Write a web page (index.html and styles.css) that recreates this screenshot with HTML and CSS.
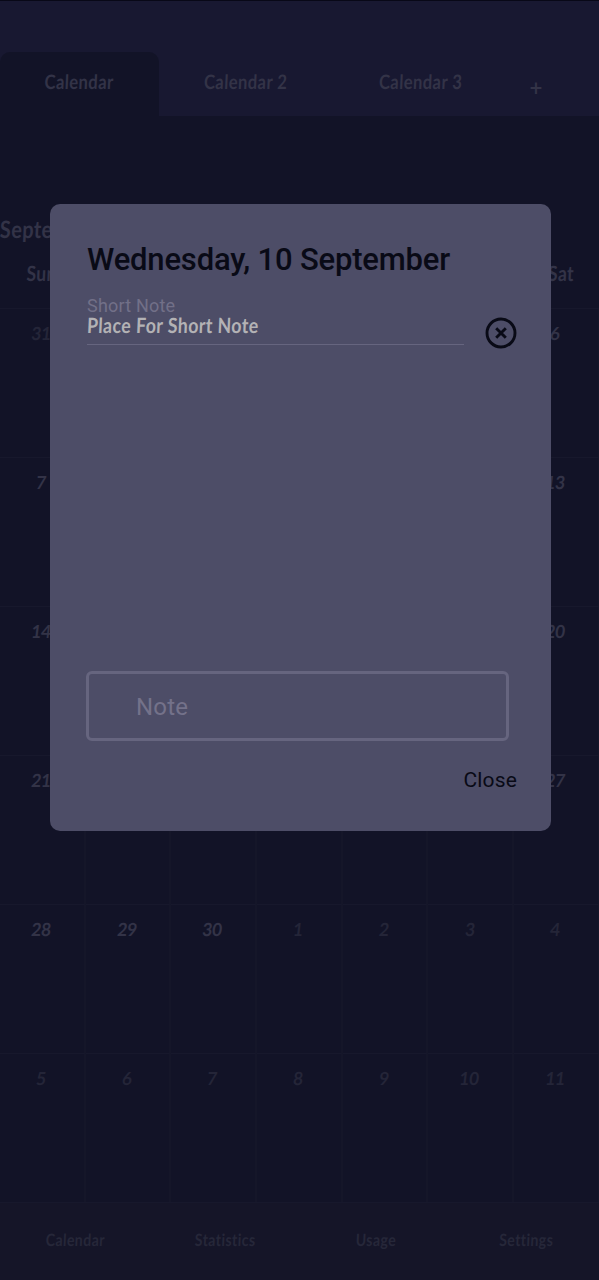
FILE: index.html
```html
<!DOCTYPE html>
<html lang="en">
<head>
<meta charset="utf-8">
<title>Calendar</title>
<link rel="stylesheet" href="styles.css">
</head>
<body>
<div class="app">
  <header class="tabs">
    <div class="tab active"><span class="hand">Calendar</span></div>
    <div class="tab"><span class="hand">Calendar 2</span></div>
    <div class="tab"><span class="hand">Calendar 3</span></div>
    <div class="add">+</div>
  </header>
  <div class="month"><span class="hand">Septe</span></div>
  <div class="weekdays"><span class="hand">Sun</span><span class="hand">Sat</span></div>
  <main class="grid" id="grid"></main>
  <footer class="nav">
    <span class="hand">Calendar</span><span class="hand">Statistics</span><span class="hand">Usage</span><span class="hand">Settings</span>
  </footer>
</div>
<section class="dialog">
  <h1 class="title">Wednesday, 10 September</h1>
  <div class="short">
    <div class="field">
      <div class="label">Short Note</div>
      <div class="value"><span class="hand">Place For Short Note</span></div>
    </div>
    <svg class="clear" viewBox="0 0 32 32" width="32" height="32">
      <circle cx="16" cy="16" r="14" fill="none" stroke="#090a16" stroke-width="2.9"/>
      <path d="M11.2 11.2 20.8 20.8M20.8 11.2 11.2 20.8" stroke="#090a16" stroke-width="2.9"/>
    </svg>
  </div>
  <div class="note">Note</div>
  <div class="close">Close</div>
</section>
<script src="script.js"></script>
</body>
</html>
```
FILE: styles.css
```css
* { box-sizing: border-box; }
body { margin: 0; background: #121327; font-family: Roboto, sans-serif; }
.hand { display: inline-block; font-family: Lato, sans-serif; font-weight: 700; white-space: nowrap; letter-spacing: .5px; transform: scaleX(.83) skewX(-3deg); }
.app { width: 599px; height: 1280px; display: flex; flex-direction: column; overflow: hidden; color: #333347; }
.tabs { height: 116px; padding-top: 51px; display: flex; background: #181831; border-top: 1px solid #080817; flex: none; }
.tab { width: 175px; display: flex; justify-content: center; padding: 17px 2px 0 0; font-size: 20px; line-height: 24px; }
.tab.active { width: 159px; background: #121327; border-radius: 10px 10px 0 0; }
.add { width: 54px; text-align: center; font-size: 22px; line-height: 26px; padding-top: 24px; }
.month { height: 134px; padding-top: 98px; font-size: 24px; line-height: 30px; flex: none; }
.month .hand { transform-origin: left; }
.weekdays { height: 58px; display: flex; justify-content: space-between; padding: 10px 23px 0; font-size: 21px; line-height: 26px; flex: none; }
.grid { display: grid; grid-template-columns: repeat(7, 85.7px); grid-template-rows: repeat(6, 149px); flex: none; }
.cell { border-top: 1px solid #17182c; border-right: 2px solid #151629; text-align: center; font-size: 18px; line-height: 24px; padding: 12px 1px 0 0; }
.cell .hand { letter-spacing: 0; transform: scaleX(.95) skewX(-7deg); }
.cell.dim { color: #242538; }
.nav { flex: 1; background: #151528; border-top: 1px solid #17182c; display: grid; grid-template-columns: repeat(4, 150.5px); justify-items: center; padding-top: 25px; margin-left: -1px; font-size: 17px; line-height: 24px; color: #262739; }
.dialog { position: absolute; left: 50px; top: 204px; width: 501px; height: 627px; background: #4d4d67; border-radius: 10px; display: flex; flex-direction: column; padding: 0 34px 0 36px; }
.title { margin: 37px 0 0 1px; font-size: 31px; line-height: 38px; font-weight: 500; letter-spacing: -.18px; color: #090a16; white-space: nowrap; }
.short { display: flex; margin: 16px 0 0 1px; justify-content: space-between; height: 50px; }
.field { width: 377px; border-bottom: 1px solid #66657f; }
.label { font-size: 18px; line-height: 22px; color: #727088; letter-spacing: .2px; }
.value { font-size: 21px; line-height: 24px; color: #b3b2b5; margin-top: -4px; }
.value .hand { transform-origin: left; transform: scaleX(.845) skewX(-3deg); }
.clear { margin-top: 22px; }
.note { width: 423px; height: 70px; margin-top: 326px; border: 3px solid #66657f; border-radius: 6px; padding: 0 47px; font-size: 24px; line-height: 67px; color: #74728a; letter-spacing: .2px; }
.close { align-self: flex-end; margin-top: 25px; font-size: 21px; line-height: 28px; color: #090a16; letter-spacing: .15px; }
```
FILE: script.js
```js
const days = [31, ...Array.from({ length: 30 }, (_, i) => i + 1), ...Array.from({ length: 11 }, (_, i) => i + 1)];
document.getElementById('grid').innerHTML = days
  .map((day, i) => `<div class="cell${i === 0 || i > 30 ? ' dim' : ''}"><span class="hand">${day}</span></div>`)
  .join('');
```
